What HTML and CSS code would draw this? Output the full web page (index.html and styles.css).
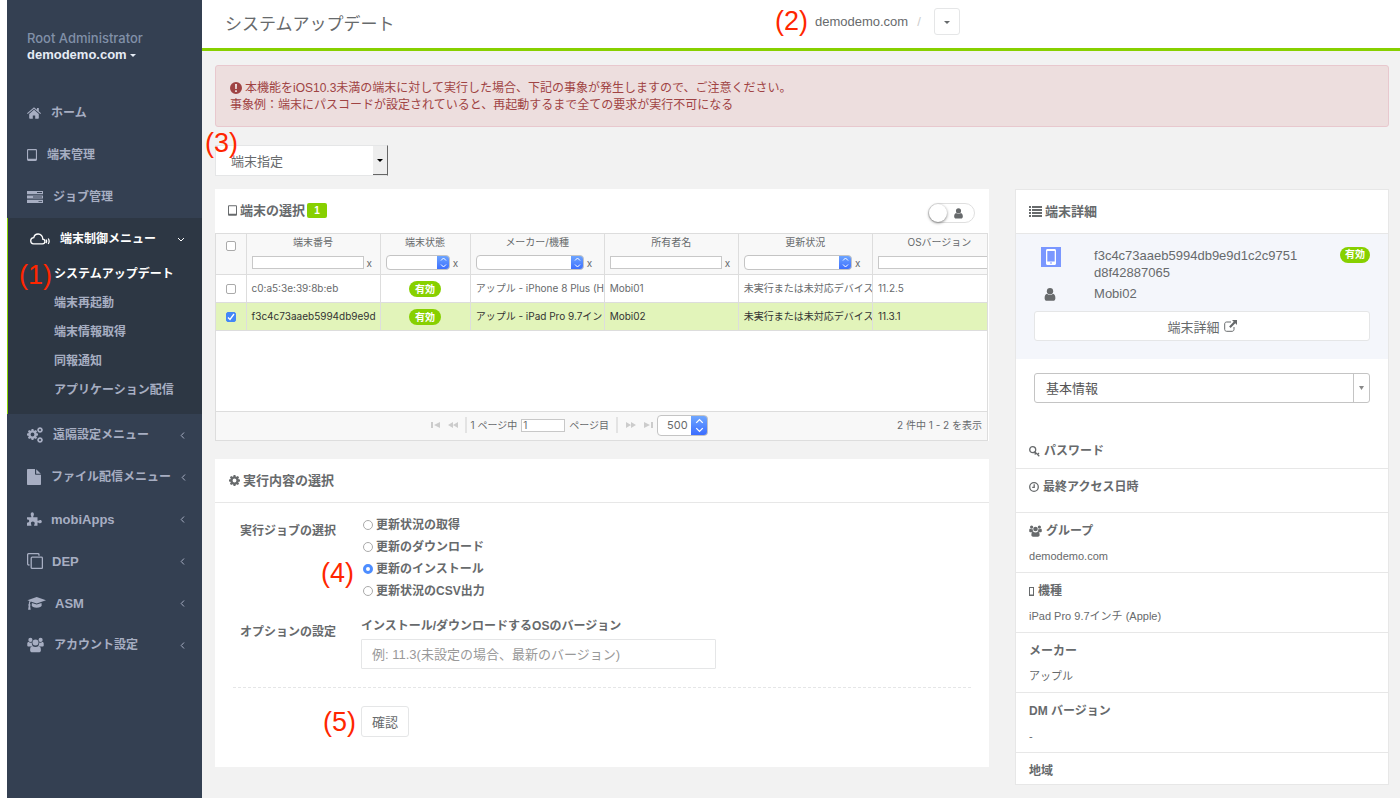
FILE: index.html
```html
<!DOCTYPE html>
<html lang="ja">
<head>
  <meta charset="utf-8">
  <title>システムアップデート</title>
  <link rel="stylesheet" href="styles.css">
</head>
<body>

<svg class="sprite" aria-hidden="true">
  <symbol id="i-user" viewBox="0 0 12 14"><circle cx="6" cy="3.5" r="3.4"/><path d="M2.8 6.2C1 6.6.2 8.6.2 11c0 1.700 1 2.800 2.500 2.800h6.600c1.500 0 2.500-1.100 2.500-2.800 0-2.400-.8-4.400-2.600-4.800C8.300 7 7.200 7.500 6 7.500S3.700 7 2.800 6.200z"/></symbol>
  <symbol id="i-users" viewBox="0 0 18 16"><circle cx="3.600" cy="2.600" r="2.200"/><circle cx="14.400" cy="2.600" r="2.200"/><circle cx="9" cy="5.300" r="3.200"/><path d="M.3 8.500V6.800c0-1.200.5-1.900 1.500-1.900 1 .7 2.300.8 3.300.4-.1 1.500.3 2.600 1.100 3.500-.8 0-1.600.300-2.200.9H1.800C.8 9.700.3 9.300.3 8.500zM17.700 8.500V6.800c0-1.200-.5-1.900-1.500-1.900-1 .7-2.300.8-3.300.4.1 1.500-.3 2.600-1.100 3.500.8 0 1.600.3 2.200.9h2.200c1 0 1.500-.4 1.500-1.200zM3.300 13.500c0-2.600.6-4.200 2.500-4.500 2 1.500 4.400 1.500 6.400 0 1.900.3 2.500 1.900 2.500 4.500 0 1.500-.9 2.300-2.300 2.300H5.600c-1.400 0-2.300-.8-2.300-2.300z"/></symbol>
  <symbol id="i-tablet" viewBox="0 0 11 13"><path fill-rule="evenodd" d="M1.500 0h8C10.400 0 11 .6 11 1.500v10c0 .9-.6 1.500-1.500 1.500h-8C.6 13 0 12.400 0 11.500v-10C0 .6.600 0 1.500 0zM1.200 1.200v9.300h8.600V1.200z"/></symbol>
  <symbol id="i-gear" viewBox="0 0 12 12"><path fill-rule="evenodd" d="M5 0h2l.3 1.600 1 .4L9.600 1 11 2.400l-.9 1.300.4 1 1.500.3v2l-1.500.3-.4 1 .9 1.300L9.600 11l-1.300-.9-1 .4L7 12H5l-.3-1.500-1-.4-1.300.9L1 9.600l.9-1.300-.4-1L0 7V5l1.500-.3.4-1L1 2.400 2.400 1l1.300.9 1-.4zM6 3.900a2.100 2.100 0 1 0 0 4.200 2.100 2.100 0 0 0 0-4.200z"/></symbol>
  <symbol id="i-left" viewBox="0 0 5 9"><path d="M4 1.500 1.200 4.500 4 7.500" fill="none" stroke="currentColor"/></symbol>
</svg>

<div class="wrapper">
  <aside class="sidebar">
    <div class="profile">
      <div class="role">Root Administrator</div>
      <div class="domain">demodemo.com<i class="caret"></i></div>
    </div>
    <nav>
      <ul class="menu">
        <li><a href="#"><svg width="14" height="12" viewBox="0 0 14 12"><path d="M7 2.800 2.200 6.900V11c0 .5.300.8.800.8h2.800V8.400h2.400v3.400H11c.5 0 .8-.3.8-.8V6.900z"/><path d="M0 6.300 6.200.9c.5-.4 1.100-.4 1.600 0L10 2.800V1h1.800v3.300L14 6.300l-.7.8L7 1.700.7 7.100z"/></svg>ホーム</a></li>
        <li><a href="#"><svg width="10" height="12"><use href="#i-tablet"/></svg>端末管理</a></li>
        <li><a href="#"><svg width="16" height="12" viewBox="0 0 16 12"><path fill-rule="evenodd" d="M0 0h16v3.200H0zM10 1.100V2h5v-.9zM0 4.400h16v3.200H0zm6 1.100v.9h9v-.9zM0 8.800h16V12H0zm11.500 1.100v.9H15v-.9z"/></svg>ジョブ管理</a></li>
        <li class="active">
          <a href="#"><svg width="20" height="12" viewBox="0 0 20 12" class="line"><path d="M3.500 10.800h9c1.700 0 2.400-1.100 2.400-2.300 0-1.300-.9-2.200-2.200-2.300C12.900 3.300 10.800 1 8.100 1 5.800 1 4.200 2.500 3.800 4.600 2 4.700.7 6 .7 7.800c0 1.700 1.200 3 2.800 3zM16 6.500c.7 1 .7 2.700 0 3.700M18.200 5.500c1.100 1.600 1.100 3.900 0 5.500"/></svg>端末制御メニュー<svg class="arrow" width="8" height="5" viewBox="0 0 8 5"><path d="M1 1l3 3 3-3" fill="none" stroke="currentColor"/></svg></a>
          <ul class="submenu">
            <li class="current"><a href="#">システムアップデート</a></li>
            <li><a href="#">端末再起動</a></li>
            <li><a href="#">端末情報取得</a></li>
            <li><a href="#">同報通知</a></li>
            <li><a href="#">アプリケーション配信</a></li>
          </ul>
        </li>
        <li><a href="#"><svg width="16" height="16" viewBox="0 0 16 16"><use href="#i-gear" y="2" width="11" height="11"/><use href="#i-gear" x="10" y="0" width="6" height="6"/><use href="#i-gear" x="10" y="10" width="6" height="6"/></svg>遠隔設定メニュー<svg class="arrow" width="5" height="9"><use href="#i-left"/></svg></a></li>
        <li><a href="#"><svg width="14" height="16" viewBox="0 0 14 16"><path d="M0 1c0-.6.4-1 1-1h7v4.800c0 .6.400 1 1 1h5V15c0 .6-.4 1-1 1H1c-.6 0-1-.4-1-1z"/><path d="M9.200.2 13.800 4.700H9.200z"/></svg>ファイル配信メニュー<svg class="arrow" width="5" height="9"><use href="#i-left"/></svg></a></li>
        <li><a href="#" class="latin"><svg width="15" height="14" viewBox="0 0 15 14"><path d="M0 5.300h4.300C4.700 4.500 3.700 4 3.700 2.300 3.700 1 4.400.2 5.300.2s1.600.8 1.600 2.100c0 1.700-1 2.200-.6 3h4.200v3.500c.8.300 1.200-.8 2.700-.8 1 0 1.600.700 1.600 1.600s-.6 1.600-1.600 1.600c-1.500 0-1.900-1-2.700-.7v3.300H7.200c-.4-.8.500-1.300.5-2.500 0-1.200-.8-1.900-1.900-1.900s-1.900.7-1.900 1.900c0 1.200.9 1.700.5 2.500H0v-3.100c1.300 0 2.200-.5 2.200-1.600C2.200 8 1.300 7.600 0 7.600z"/></svg>mobiApps<svg class="arrow" width="5" height="9"><use href="#i-left"/></svg></a></li>
        <li><a href="#" class="latin"><svg class="line" width="16" height="16" viewBox="0 0 16 16"><path d="M2.500 12H1.800C1 12 .6 11.600.6 10.800v-9C.6 1 1 .6 1.800.6h9c.8 0 1.200.4 1.200 1.200v.9"/><rect x="4.200" y="4.200" width="11.200" height="11.200" rx="1"/></svg>DEP<svg class="arrow" width="5" height="9"><use href="#i-left"/></svg></a></li>
        <li><a href="#" class="latin"><svg width="19" height="13" viewBox="0 0 19 13"><path d="M9.700 0 19 3.200 9.700 6.400 3.700 4.400c-.5.700-.7 1.500-.7 2.600.7.600.7 1.300.1 1.800l.6 4H1.100l.6-4c-.6-.5-.6-1.300.1-1.800 0-1.200.2-2.200.7-3L.4 3.200z"/><path d="m4.900 5.900 4.800 1.700 4.800-1.700.2 2.700c0 1.200-2.200 2.200-5 2.200s-5-1-5-2.200z"/></svg>ASM<svg class="arrow" width="5" height="9"><use href="#i-left"/></svg></a></li>
        <li><a href="#"><svg width="17" height="16"><use href="#i-users"/></svg>アカウント設定<svg class="arrow" width="5" height="9"><use href="#i-left"/></svg></a></li>
      </ul>
    </nav>
  </aside>

  <div class="page">
    <header class="topbar">
      <h1>システムアップデート</h1>
      <div class="crumb">
        <a href="#">demodemo.com</a>
        <span class="slash">/</span>
        <button type="button" class="btn btn-caret" aria-label="グループ"><i class="caret"></i></button>
      </div>
    </header>

    <main>
      <div class="alert">
        <p><svg width="12" height="12" viewBox="0 0 12 12"><path fill-rule="evenodd" d="M6 0a6 6 0 1 0 0 12A6 6 0 0 0 6 0zM5 2h2l-.2 5H5.200zM5.100 8.200h1.800V10H5.100z"/></svg>本機能をiOS10.3未満の端末に対して実行した場合、下記の事象が発生しますので、ご注意ください。</p>
        <p>事象例：端末にパスコードが設定されていると、再起動するまで全ての要求が実行不可になる</p>
      </div>

      <select class="target" aria-label="対象">
        <option>端末指定</option>
      </select>

      <div class="columns">
        <div class="left">
          <section class="panel">
            <div class="panel-title">
              <svg width="9" height="11"><use href="#i-tablet"/></svg>
              <h2>端末の選択</h2>
              <span class="count">1</span>
              <label class="toggle"><input type="checkbox" aria-label="所有者"><span class="knob"></span><svg width="9" height="11"><use href="#i-user"/></svg></label>
            </div>
            <div class="grid">
              <div class="grid-body">
                <table>
                  <colgroup>
                    <col class="c-check"><col class="c-wide"><col class="c-state"><col class="c-wide"><col class="c-wide"><col class="c-wide"><col class="c-wide">
                  </colgroup>
                  <thead>
                    <tr>
                      <th><input type="checkbox" aria-label="全て選択"></th>
                      <th>端末番号<div class="filter"><input type="text" aria-label="端末番号"><a href="#">x</a></div></th>
                      <th>端末状態<div class="filter"><select class="mac" aria-label="端末状態"></select><a href="#">x</a></div></th>
                      <th>メーカー/機種<div class="filter"><select class="mac" aria-label="機種"></select><a href="#">x</a></div></th>
                      <th>所有者名<div class="filter"><input type="text" aria-label="所有者名"><a href="#">x</a></div></th>
                      <th>更新状況<div class="filter"><select class="mac" aria-label="更新状況"></select><a href="#">x</a></div></th>
                      <th>OSバージョン<div class="filter"><input type="text" aria-label="OSバージョン"></div></th>
                    </tr>
                  </thead>
                  <tbody>
                    <tr>
                      <td><input type="checkbox" aria-label="Mobi01"></td>
                      <td>c0:a5:3e:39:8b:eb</td>
                      <td><span class="pill">有効</span></td>
                      <td>アップル - iPhone 8 Plus (H</td>
                      <td>Mobi01</td>
                      <td>未実行または未対応デバイス</td>
                      <td>11.2.5</td>
                    </tr>
                    <tr class="selected">
                      <td><input type="checkbox" aria-label="Mobi02" checked></td>
                      <td>f3c4c73aaeb5994db9e9d</td>
                      <td><span class="pill">有効</span></td>
                      <td>アップル - iPad Pro 9.7イン</td>
                      <td>Mobi02</td>
                      <td>未実行または未対応デバイス</td>
                      <td>11.3.1</td>
                    </tr>
                  </tbody>
                </table>
              </div>
              <div class="pager">
                <div class="pager-nav">
                  <svg width="9" height="6" viewBox="0 0 9 6"><path d="M0 0h2v6H0zM9 0v6L3 3z"/></svg>
                  <svg width="10" height="6" viewBox="0 0 10 6"><path d="M5 0v6L0 3zM10 0v6L5 3z"/></svg>
                  <i class="sep"></i>
                  <label for="page-no">1 ページ中</label>
                  <input type="text" id="page-no" value="1">
                  <span>ページ目</span>
                  <i class="sep"></i>
                  <svg width="10" height="6" viewBox="0 0 10 6"><path d="M0 0v6l5-3zM5 0v6l5-3z"/></svg>
                  <svg width="9" height="6" viewBox="0 0 9 6"><path d="M0 0v6l6-3zM7 0h2v6H7z"/></svg>
                  <select class="mac mac-lg" aria-label="件数"><option>500</option></select>
                </div>
                <div class="pager-info">2 件中 1 - 2 を表示</div>
              </div>
            </div>
          </section>

          <section class="panel">
            <div class="panel-title ruled">
              <svg width="11" height="11"><use href="#i-gear"/></svg>
              <h2>実行内容の選択</h2>
            </div>
            <form class="job">
              <div class="row">
                <div class="row-label">実行ジョブの選択</div>
                <div class="radios">
                  <label><input type="radio" name="job">更新状況の取得</label>
                  <label><input type="radio" name="job">更新のダウンロード</label>
                  <label><input type="radio" name="job" checked>更新のインストール</label>
                  <label><input type="radio" name="job">更新状況のCSV出力</label>
                </div>
              </div>
              <div class="row">
                <div class="row-label">オプションの設定</div>
                <div class="field">
                  <label for="os-version">インストール/ダウンロードするOSのバージョン</label>
                  <input type="text" id="os-version" placeholder="例: 11.3(未設定の場合、最新のバージョン)">
                </div>
              </div>
              <hr>
              <button type="button" class="btn btn-confirm">確認</button>
            </form>
          </section>
        </div>

        <section class="panel detail">
          <div class="panel-title ruled">
            <svg width="13" height="11" viewBox="0 0 13 11"><path d="M0 0h2v2H0zM3 0h10v2H3zM0 3h2v2H0zM3 3h10v2H3zM0 6h2v2H0zM3 6h10v2H3zM0 9h2v2H0zM3 9h10v2H3z"/></svg>
            <h2>端末詳細</h2>
          </div>
          <div class="summary">
            <div class="summary-row">
              <span class="summary-icon"><span class="device"><svg width="10" height="16" viewBox="0 0 10 16"><path fill-rule="evenodd" d="M1.500 0h7C9.400 0 10 .6 10 1.500v13c0 .9-.6 1.500-1.500 1.500h-7C.6 16 0 15.400 0 14.500v-13C0 .6.600 0 1.500 0zM1.300 2v10.500h7.400V2zM4 13.600v1h2v-1z"/></svg></span></span>
              <span class="serial">f3c4c73aaeb5994db9e9d1c2c9751<br>d8f42887065</span>
              <span class="pill">有効</span>
            </div>
            <div class="summary-row">
              <span class="summary-icon"><svg width="12" height="13"><use href="#i-user"/></svg></span>
              <span>Mobi02</span>
            </div>
            <button type="button" class="btn btn-detail">端末詳細<svg width="13" height="12" viewBox="0 0 13 12"><path d="M7 2H2.600C1.500 2 .7 2.800.7 3.900v5.500c0 1.100.8 1.900 1.900 1.900h5.500c1.100 0 1.900-.8 1.900-1.900V7" fill="none" stroke="currentColor"/><path d="M8 0h5v5l-1.700-1.700-4.700 4.600-1.500-1.500 4.600-4.700z"/></svg></button>
          </div>
          <div class="info-select">
            <select aria-label="情報">
              <option>基本情報</option>
            </select>
          </div>
          <dl>
            <div class="short"><dt><svg width="11" height="11" viewBox="0 0 11 11" class="line"><circle cx="3.700" cy="3.700" r="3"/><path d="m5.900 5.900 4.400 4.400M8.500 8.500l1.500-1.500M6.900 7l-1.200 1.500"/></svg>パスワード</dt></div>
            <div class="medium"><dt><svg width="10" height="10" viewBox="0 0 10 10" class="line"><circle cx="5" cy="5" r="4.300"/><path d="M5.200 2.200v3.200H3.200"/></svg>最終アクセス日時</dt></div>
            <div><dt><svg width="13" height="12"><use href="#i-users"/></svg>グループ</dt><dd>demodemo.com</dd></div>
            <div><dt><svg width="5" height="9" viewBox="0 0 5 9"><path fill-rule="evenodd" d="M0 0h5v9H0zM1 1v6.500h3V1z"/></svg>機種</dt><dd>iPad Pro 9.7インチ (Apple)</dd></div>
            <div><dt>メーカー</dt><dd>アップル</dd></div>
            <div><dt>DM バージョン</dt><dd>-</dd></div>
            <div class="last"><dt>地域</dt></div>
          </dl>
        </section>
      </div>
    </main>
  </div>

  <!-- step numbers laid over the screen -->
  <span class="step step1">(1)</span>
  <span class="step step2">(2)</span>
  <span class="step step3">(3)</span>
  <span class="step step4">(4)</span>
  <span class="step step5">(5)</span>
</div>

</body>
</html>
```

FILE: styles.css
```css
* { box-sizing: border-box; }

body {
  margin: 0;
  font-family: "Liberation Sans", "Noto Sans CJK JP", sans-serif;
  font-size: 13px;
  line-height: 17px;
  color: #676a6c;
  background: #fff;
}

h1, h2, p, ul, dl, dd { margin: 0; padding: 0; }
ul { list-style: none; }
a { color: inherit; text-decoration: none; }
svg { fill: currentColor; flex: none; }
.line { fill: none; stroke: currentColor; stroke-width: 1.3; }
.sprite { display: none; }

input, select, button {
  font-family: inherit;
  color: inherit;
  margin: 0;
}

.caret {
  display: inline-block;
  border: 3px solid transparent;
  border-top-color: currentColor;
  border-bottom: 0;
  vertical-align: middle;
}

.wrapper {
  position: relative;
  display: flex;
  min-height: 100vh;
  padding-left: 7px;
}

/* sidebar */
.sidebar {
  flex: none;
  width: 195px;
  background: #344052;
  color: #a7aec2;
  font-weight: bold;
}

.profile { padding: 30px 20px 29px; }
.role {
  font-family: Inter, sans-serif;
  font-weight: 500;
  line-height: 16px;
  color: #8190a8;
}
.domain { color: #e6ecf5; }
.domain .caret { margin-left: 3px; }

.menu a {
  display: flex;
  align-items: center;
  gap: 10px;
  height: 42px;
  padding: 0 17px 0 20px;
  font-size: 12px;
  white-space: nowrap;
}
.menu .latin { font-size: 13px; gap: 9px; }
.menu .arrow { margin-left: auto; }
.menu .active {
  background: #2d3744;
  border-left: 1px solid #87d000;
  padding-bottom: 9px;
}
.menu .active > a {
  color: #fff;
  padding-left: 22px;
}
.menu .submenu a {
  height: 29px;
  padding: 0 0 0 46px;
}
.submenu .current { color: #fff; }

/* header */
.page {
  flex: 1;
  min-width: 0;
  background: #f2f2f2;
}

.topbar {
  display: grid;
  grid-template-columns: 51% 1fr;
  align-items: center;
  height: 51px;
  background: #fff;
  border-bottom: 3px solid #87d000;
}
.topbar h1 {
  padding-left: 23px;
  font-size: 17px;
  font-weight: normal;
}
.crumb {
  display: flex;
  align-items: center;
  padding: 0 0 5px 2px;
}
.slash { margin: 0 13px 0 9px; color: #ccc; }

.btn {
  background: #fff;
  border: 1px solid #e5e6e7;
  border-radius: 3px;
  font-size: 13px;
}
.btn-caret { width: 26px; height: 27px; padding: 0; }

main { padding: 14px 11px 13px 13px; }

.alert {
  height: 62px;
  padding: 14px;
  border: 1px solid #e8c8ce;
  border-radius: 3px;
  background: #eddede;
  color: #a04343;
  font-size: 12px;
}
.alert svg { vertical-align: -2px; margin-right: 3px; }

.target {
  display: block;
  appearance: none;
  width: 173px;
  height: 31px;
  margin: 18px 0 13px;
  padding: 2px 15px 0;
  border: 1px solid #e5e6e7;
  border-right: 1px solid #666;
  border-radius: 0;
  font-size: 13px;
  background: #fff url("data:image/svg+xml,%3Csvg xmlns='http://www.w3.org/2000/svg' width='14' height='29'%3E%3Cpath fill='%23eee' d='M0 0h14v29H0z'/%3E%3Cpath fill='%23666' d='M0 28h14v1H0z'/%3E%3Cpath d='M4 13h6l-3 3z'/%3E%3C/svg%3E") right center no-repeat;
}

/* panels */
.columns {
  display: grid;
  grid-template-columns: minmax(0, 2.07fr) minmax(0, 1fr);
  gap: 26px;
  align-items: start;
}
.panel { background: #fff; }
.left .panel + .panel { margin-top: 18px; }

.panel-title {
  display: flex;
  align-items: center;
  height: 44px;
  padding: 0 14px 2px 13px;
}
.panel-title h2 { font-size: 13px; margin-left: 3px; }
.panel-title.ruled {
  padding: 0 14px;
  border-bottom: 1px solid #e7e7e7;
}

.count {
  margin-left: 2px;
  width: 20px;
  border-radius: 2px;
  background: #87d000;
  color: #fff;
  font-size: 10px;
  line-height: 15px;
  font-weight: bold;
  text-align: center;
}
.toggle {
  display: flex;
  align-items: center;
  gap: 7px;
  width: 47px;
  height: 20px;
  margin: 6px 0 0 auto;
  border: 1px solid #dfdfdf;
  border-radius: 10px;
}
.toggle input { position: absolute; opacity: 0; }
.knob {
  width: 18px;
  height: 18px;
  border-radius: 50%;
  background: #fff;
  box-shadow: 0 1px 3px rgba(0, 0, 0, 0.5);
}

.pill {
  display: inline-block;
  padding: 0 5px;
  border-radius: 8px;
  background: #87d000;
  color: #fff;
  font-size: 10px;
  line-height: 16px;
  font-weight: bold;
}

/* device grid */
.grid {
  margin-right: 1px;
  border: 1px solid #ddd;
  font-family: Inter, "Noto Sans CJK JP", sans-serif;
  font-size: 10px;
}
.grid-body { height: 177px; overflow: hidden; }
table {
  width: 791px;
  table-layout: fixed;
  border-collapse: collapse;
}
.c-check { width: 30px; }
.c-state { width: 90px; }
.c-wide { width: 134px; }

th {
  height: 40px;
  padding: 0 5px;
  background: #f8f8f8;
  font-weight: normal;
  line-height: 16px;
  vertical-align: top;
  border-right: 1px solid #ddd;
  border-bottom: 1px solid #ddd;
}
td {
  height: 28px;
  padding: 0 0 0 5px;
  border-right: 1px solid #ddd;
  border-bottom: 1px solid #ddd;
  white-space: nowrap;
  overflow: hidden;
}
td:first-child, td:nth-child(3) { text-align: center; padding: 0; }
th:first-child { padding: 3px 0 0; }
td .pill { padding: 0 6px; vertical-align: middle; }
.selected { background: #e2f4ba; color: #333; }

input[type=checkbox] {
  appearance: none;
  width: 10px;
  height: 10px;
  border: 1px solid #aaa;
  border-radius: 2px;
  background: #fff;
  vertical-align: middle;
}
input[type=checkbox]:checked {
  border-color: #4387f7;
  background: #4387f7 url("data:image/svg+xml,%3Csvg xmlns='http://www.w3.org/2000/svg' width='8' height='8'%3E%3Cpath d='M1 4.500l2 2L7 1' fill='none' stroke='%23fff' stroke-width='1.300'/%3E%3C/svg%3E") center no-repeat;
}

.filter {
  display: flex;
  align-items: center;
  gap: 3px;
  height: 15px;
  margin-top: 5px;
}
.filter input {
  width: 112px;
  height: 13px;
  border: 1px solid #c8c8c8;
  background: #fff;
}
.filter select { flex: 1; min-width: 0; }
.filter select + a { width: 12px; text-align: left; }

.mac {
  appearance: none;
  height: 15px;
  padding: 0 9px;
  border: 1px solid #c4c4c4;
  border-radius: 4px;
  font-size: 11px;
  background: #fff url("data:image/svg+xml,%3Csvg xmlns='http://www.w3.org/2000/svg' width='13' height='15' viewBox='0 0 13 15'%3E%3ClinearGradient id='g' x2='0' y2='1'%3E%3Cstop stop-color='%2370a8ff'/%3E%3Cstop offset='1' stop-color='%233a6cff'/%3E%3C/linearGradient%3E%3Cpath fill='url(%23g)' d='M0 0h13v15H0z'/%3E%3Cpath d='M4 5.500l2.500-2.500L9 5.500M4 9.500l2.500 2.500L9 9.500' fill='none' stroke='%23fff'/%3E%3C/svg%3E") right center no-repeat;
  background-origin: border-box;
}
.mac-lg {
  width: 51px;
  height: 21px;
  background-size: 17px 21px;
}

.pager {
  display: flex;
  align-items: center;
  justify-content: flex-end;
  height: 29px;
  padding: 0 5px 2px 0;
  border-top: 1px solid #ddd;
  background: #f8f8f8;
}
.pager-nav {
  display: flex;
  align-items: center;
  gap: 4px;
}
.pager-nav > svg { color: #ccc; margin-left: 4px; }
.sep { width: 2px; height: 16px; background: #e3e3e3; margin-left: 3px; }
.pager-nav input {
  width: 44px;
  height: 13px;
  padding: 0 1px;
  border: 1px solid #c8c8c8;
  font-size: 10px;
}
.pager-info { margin-left: 189px; }

/* job form */
.job {
  padding: 11px 18px 30px;
  font-size: 12px;
  font-weight: bold;
}
.row { display: flex; margin-bottom: 13px; }
.row-label {
  flex: none;
  width: 128px;
  padding: 7px 0 0 7px;
  line-height: 20px;
}
.radios label {
  display: flex;
  align-items: center;
  height: 22px;
  padding-left: 2px;
}
input[type=radio] {
  appearance: none;
  width: 10px;
  height: 10px;
  margin-right: 3px;
  border: 1px solid #aaa;
  border-radius: 50%;
}
input[type=radio]:checked { border: 3px solid #4d8dff; }

.field { width: 355px; }
.field label { display: block; line-height: 22px; }
.field input {
  width: 100%;
  height: 30px;
  margin-top: 2px;
  padding: 0 10px;
  border: 1px solid #e5e6e7;
  border-radius: 1px;
  font-size: 13px;
}
.field input::placeholder { color: #999; }
.job hr {
  margin: 18px 0;
  border: 0;
  border-top: 1px dashed #e5e6e7;
}
.btn-confirm { height: 31px; width: 48px; margin-left: 128px; padding: 0; }

/* detail panel */
.detail { border: 1px solid #e7e7e7; }
.detail > .panel-title { padding: 0 13px; }
.summary {
  padding: 13px 18px 18px;
  background: #f4f6fb;
}
.summary-row {
  display: flex;
  align-items: flex-start;
  margin-bottom: 4px;
}
.summary-icon {
  flex: none;
  width: 60px;
  padding-left: 7px;
}
.summary-icon > svg { margin: 3px 0 0 3px; vertical-align: top; }
.device {
  display: flex;
  align-items: center;
  justify-content: center;
  width: 20px;
  height: 20px;
  background: #7a97ff;
  color: #fff;
}
.serial { margin-right: auto; }
.btn-detail {
  display: flex;
  align-items: center;
  justify-content: center;
  gap: 4px;
  width: 100%;
  height: 30px;
  margin-top: 9px;
}

.info-select { padding: 14px 18px 30px; }
.info-select select {
  appearance: none;
  width: 100%;
  height: 30px;
  padding: 0 11px;
  border: 1px solid #c4c4c4;
  border-radius: 3px;
  color: #555;
  font-size: 13px;
  background: #fff url("data:image/svg+xml,%3Csvg xmlns='http://www.w3.org/2000/svg' width='16' height='28'%3E%3Cpath fill='%23c4c4c4' d='M0 0h1v28H0z'/%3E%3Cpath fill='%23888' d='M6 12h5l-2.500 4z'/%3E%3C/svg%3E") right center no-repeat;
}

dl > div {
  height: 60px;
  padding: 9px 13px 0;
  border-bottom: 1px solid #e7e7e7;
}
dl .short { height: 36px; }
dl .medium { height: 44px; }
dl .last { height: 31px; border-bottom: 0; }
dt {
  display: flex;
  align-items: center;
  gap: 4px;
  font-size: 12px;
  line-height: 18px;
  font-weight: bold;
}
dd { margin-top: 7px; font-size: 11px; line-height: 18px; }

/* step numbers */
.step {
  position: absolute;
  color: #ff2600;
  font-size: 27px;
  line-height: 26px;
}
.step1 { left: 19px; top: 262px; }
.step2 { left: 775px; top: 8px; }
.step3 { left: 205px; top: 130px; }
.step4 { left: 321px; top: 560px; }
.step5 { left: 323px; top: 709px; }
```
